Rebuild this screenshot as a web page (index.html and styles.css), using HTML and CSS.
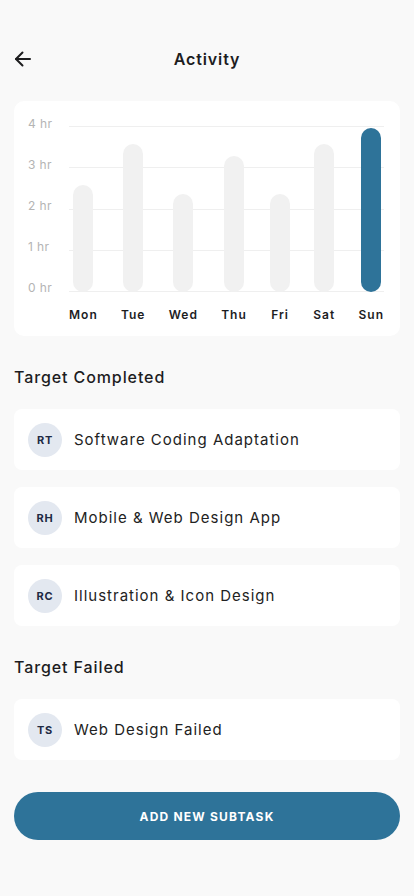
FILE: index.html
```html
<!DOCTYPE html>
<html lang="en">
<head>
    <meta charset="UTF-8">
    <meta name="viewport" content="width=device-width, initial-scale=1.0">
    <title>Activity</title>
    <link rel="stylesheet" href="styles.css">
</head>
<body>
    <div class="screen">
        <header class="top-bar">
            <a href="#" class="back-button" aria-label="Back">
                <svg width="18" height="18" viewBox="0 0 18 18" fill="none" stroke="#1d1d1f" stroke-width="2" stroke-linecap="round" stroke-linejoin="round">
                    <path d="M16 9H2"/>
                    <path d="M8.5 2.5L2 9l6.5 6.5"/>
                </svg>
            </a>
            <h1 class="page-title">Activity</h1>
        </header>

        <!-- Weekly chart -->
        <section class="chart-card">
            <div class="chart">
                <div class="y-axis">
                    <span>4 hr</span>
                    <span>3 hr</span>
                    <span>2 hr</span>
                    <span>1 hr</span>
                    <span>0 hr</span>
                </div>
                <div class="plot">
                    <div class="grid">
                        <i></i><i></i><i></i><i></i><i></i>
                    </div>
                    <div class="days">
                        <div class="day"><div class="bar-slot"><div class="bar" style="height:107px"></div></div><span>Mon</span></div>
                        <div class="day"><div class="bar-slot"><div class="bar" style="height:148px"></div></div><span>Tue</span></div>
                        <div class="day"><div class="bar-slot"><div class="bar" style="height:98px"></div></div><span>Wed</span></div>
                        <div class="day"><div class="bar-slot"><div class="bar" style="height:136px"></div></div><span>Thu</span></div>
                        <div class="day"><div class="bar-slot"><div class="bar" style="height:98px"></div></div><span>Fri</span></div>
                        <div class="day"><div class="bar-slot"><div class="bar" style="height:148px"></div></div><span>Sat</span></div>
                        <div class="day"><div class="bar-slot"><div class="bar active" style="height:164px"></div></div><span>Sun</span></div>
                    </div>
                </div>
            </div>
        </section>

        <h2 class="section-title">Target Completed</h2>
        <ul class="task-list">
            <li class="task-item"><span class="avatar">RT</span>Software Coding Adaptation</li>
            <li class="task-item"><span class="avatar">RH</span>Mobile &amp; Web Design App</li>
            <li class="task-item"><span class="avatar">RC</span>Illustration &amp; Icon Design</li>
        </ul>

        <h2 class="section-title">Target Failed</h2>
        <ul class="task-list">
            <li class="task-item"><span class="avatar">TS</span>Web Design Failed</li>
        </ul>

        <button type="button" class="add-button">ADD NEW SUBTASK</button>
    </div>
</body>
</html>
```

FILE: styles.css
```css
body {
    margin: 0;
    background: #f9f9f9;
    font-family: 'Inter', 'Open Sans', Arial, sans-serif;
    color: #1d1d1f;
}
.screen {
    width: 414px;
    min-height: 896px;
    box-sizing: border-box;
    padding: 0 14px;
}
.top-bar {
    position: relative;
    display: flex;
    align-items: center;
    justify-content: center;
    height: 48px;
    padding-top: 35px;
}
.back-button {
    position: absolute;
    left: 0;
    top: 50px;
    display: flex;
}
.page-title {
    margin: 0;
    font-size: 16px;
    font-weight: 600;
    letter-spacing: 0.9px;
}
/* Chart card */
.chart-card {
    margin-top: 18px;
    background: #fff;
    border-radius: 10px;
    padding: 16px 16px 14px 14px;
    height: 235px;
    box-sizing: border-box;
}
.chart {
    display: flex;
}
.y-axis {
    display: flex;
    flex-direction: column;
    justify-content: space-between;
    width: 41px;
    height: 178px;
    font-size: 12px;
    color: #b4b4b4;
    letter-spacing: 0.4px;
}
.y-axis span {
    line-height: 14px;
}
.plot {
    position: relative;
    flex: 1;
}
.grid {
    position: absolute;
    left: 0;
    right: 0;
    top: 9px;
    height: 166px;
    display: flex;
    flex-direction: column;
    justify-content: space-between;
}
.grid i {
    display: block;
    height: 1px;
    background: #efefef;
}
.days {
    position: relative;
    display: flex;
    justify-content: space-between;
}
.day {
    display: flex;
    flex-direction: column;
    align-items: center;
}
.day span {
    margin-top: 15px;
    font-size: 12px;
    font-weight: 600;
    letter-spacing: 1px;
    color: #1d1d1f;
}
.bar-slot {
    height: 175px;
    display: flex;
    align-items: flex-end;
}
.bar {
    width: 20px;
    border-radius: 10px;
    background: #f1f1f1;
}
.bar.active {
    background: #2e7399;
}
/* Lists */
.section-title {
    margin: 31px 0 22px;
    font-size: 16px;
    font-weight: 500;
    letter-spacing: 0.9px;
    color: #1d1d1f;
}
.task-list {
    list-style: none;
    margin: 0;
    padding: 0;
    display: flex;
    flex-direction: column;
    gap: 17px;
}
.task-item {
    display: flex;
    align-items: center;
    height: 61px;
    padding: 0 14px;
    background: #fff;
    border-radius: 8px;
    font-size: 15px;
    letter-spacing: 1px;
    color: #222;
    box-sizing: border-box;
}
.avatar {
    width: 34px;
    height: 34px;
    border-radius: 50%;
    background: #e3e8f0;
    color: #1e2a44;
    font-size: 11px;
    font-weight: 700;
    letter-spacing: 0.8px;
    display: flex;
    align-items: center;
    justify-content: center;
    margin-right: 12px;
    flex-shrink: 0;
}
.add-button {
    display: block;
    width: 100%;
    height: 48px;
    margin-top: 32px;
    border: none;
    border-radius: 24px;
    background: #2e7399;
    color: #fff;
    font-family: inherit;
    font-size: 12px;
    font-weight: 700;
    letter-spacing: 1.2px;
    cursor: pointer;
}
```
